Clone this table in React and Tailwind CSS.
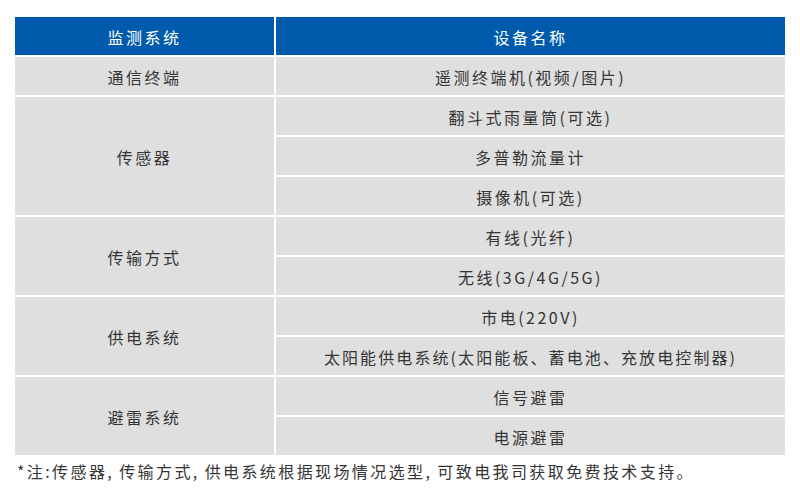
const groups = [
  { name: "通信终端", items: ["遥测终端机(视频/图片)"] },
  { name: "传感器", items: ["翻斗式雨量筒(可选)", "多普勒流量计", "摄像机(可选)"] },
  { name: "传输方式", items: ["有线(光纤)", "无线(3G/4G/5G)"] },
  { name: "供电系统", items: ["市电(220V)", "太阳能供电系统(太阳能板、蓄电池、充放电控制器)"] },
  { name: "避雷系统", items: ["信号避雷", "电源避雷"] },
];

const font = "font-['Noto_Sans_CJK_SC','Noto_Sans',sans-serif]";

// footnote with slightly wider commas, as in the source image
const note = ["*注:传感器", ",", "传输方式", ",", "供电系统根据现场情况选型", ",", "可致电我司获取免费技术支持。"];

export default function App() {
  return (
    <div className={`w-[800px] h-[500px] bg-white pt-[17px] pl-[15px] ${font}`}>
      <div className="grid grid-cols-[259px_509px] auto-rows-[38px] gap-[2px] w-[770px] text-[16px] tracking-[2.5px] text-[#353535]">
        <div className="flex items-center justify-center bg-[#005bac] text-white pt-[2px]">监测系统</div>
        <div className="flex items-center justify-center bg-[#005bac] text-white pt-[2px]">设备名称</div>
        {groups.map((g) => (
          <GroupRows key={g.name} group={g} />
        ))}
      </div>
      <p className="mt-[3px] pl-[2px] text-[16px] leading-[26px] tracking-[2.4px] text-[#353535]">
        {note.map((part, i) =>
          i % 2 === 1 ? (
            <span key={i} className="pr-[5px]">
              {part}
            </span>
          ) : (
            <span key={i}>{part}</span>
          )
        )}
      </p>
    </div>
  );
}

function GroupRows({ group }) {
  const spans = ["row-span-1", "row-span-2", "row-span-3"];
  return (
    <>
      <div
        className={`${spans[group.items.length - 1]} flex items-center justify-center bg-[#dfdfdf] pt-[2px]`}
      >
        {group.name}
      </div>
      {group.items.map((item) => (
        <div
          key={item}
          className={`col-start-2 flex items-center justify-center bg-[#dfdfdf] pt-[2px] ${
            item.length > 20 ? "tracking-[2.1px]" : ""
          }`}
        >
          {item}
        </div>
      ))}
    </>
  );
}
